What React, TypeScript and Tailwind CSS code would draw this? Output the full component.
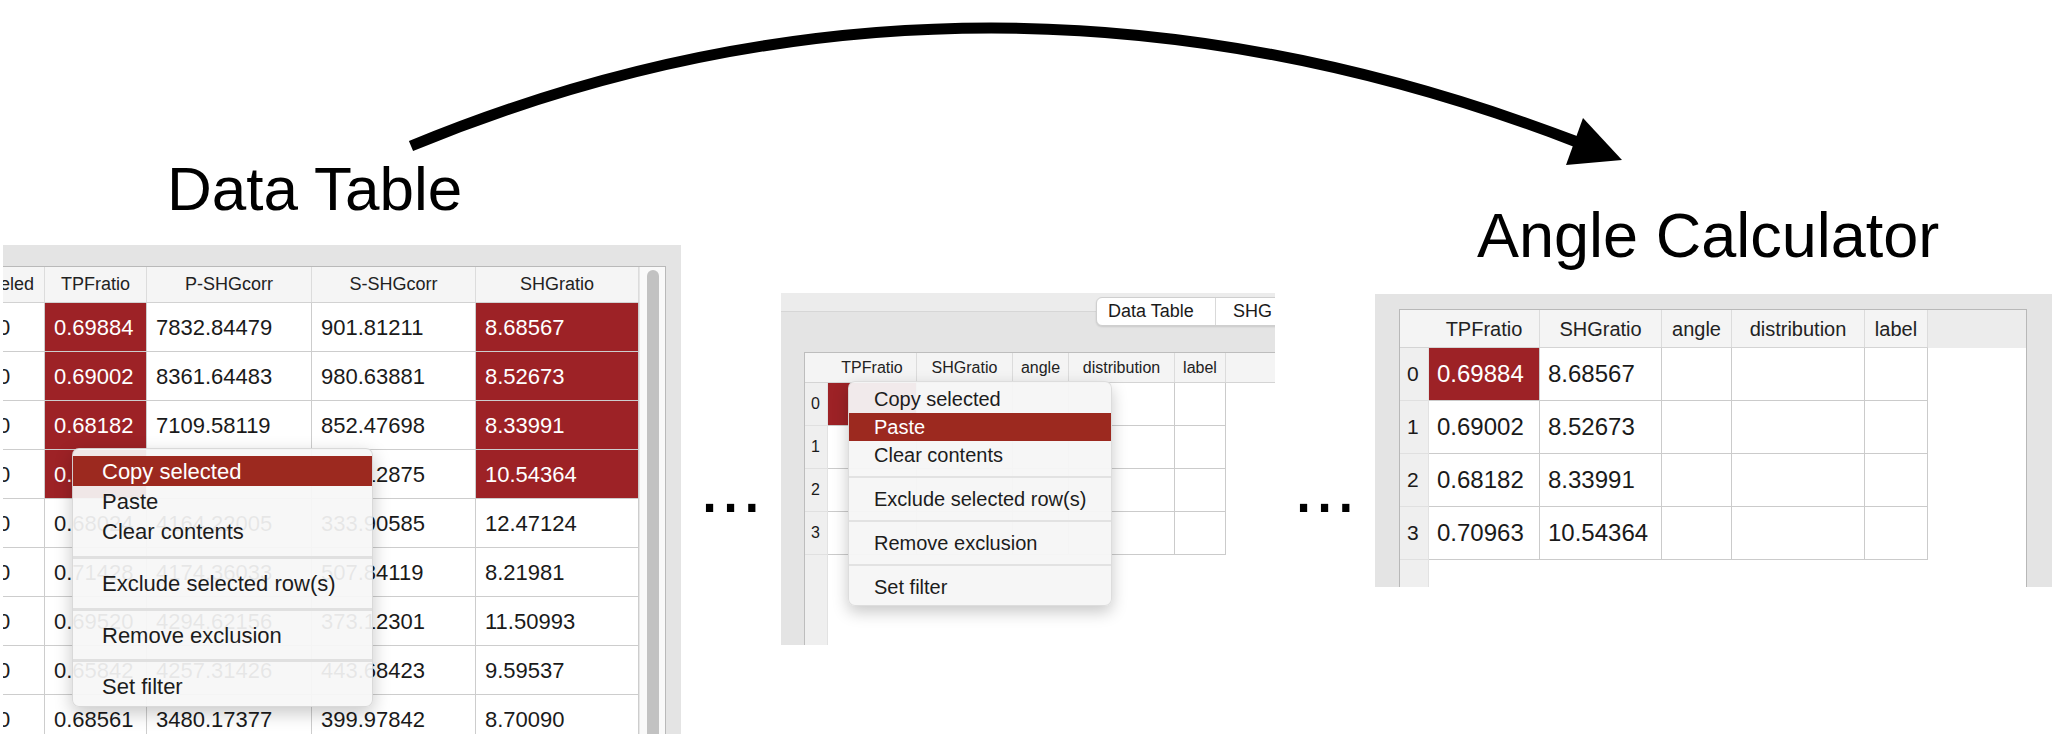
import React from "react";

type Cell = { v: string; sel?: boolean };

const p1Widths = [56, 102, 165, 164, 163];
const p1Headers = ["Labeled", "TPFratio", "P-SHGcorr", "S-SHGcorr", "SHGratio"];
const p1Rows: Cell[][] = [
  [{ v: "0" }, { v: "0.69884", sel: true }, { v: "7832.84479" }, { v: "901.81211" }, { v: "8.68567", sel: true }],
  [{ v: "0" }, { v: "0.69002", sel: true }, { v: "8361.64483" }, { v: "980.63881" }, { v: "8.52673", sel: true }],
  [{ v: "0" }, { v: "0.68182", sel: true }, { v: "7109.58119" }, { v: "852.47698" }, { v: "8.33991", sel: true }],
  [{ v: "0" }, { v: "0.70963", sel: true }, { v: "5930.01860" }, { v: "705.12875" }, { v: "10.54364", sel: true }],
  [{ v: "0" }, { v: "0.68024" }, { v: "4164.22005" }, { v: "333.90585" }, { v: "12.47124" }],
  [{ v: "0" }, { v: "0.71428" }, { v: "4174.36033" }, { v: "507.84119" }, { v: "8.21981" }],
  [{ v: "0" }, { v: "0.69520" }, { v: "4294.62156" }, { v: "373.12301" }, { v: "11.50993" }],
  [{ v: "0" }, { v: "0.65842" }, { v: "4257.31426" }, { v: "443.68423" }, { v: "9.59537" }],
  [{ v: "0" }, { v: "0.68561" }, { v: "3480.17377" }, { v: "399.97842" }, { v: "8.70090" }],
];

const acHeaders = ["TPFratio", "SHGratio", "angle", "distribution", "label"];
const midWidths = [89, 96, 56, 106, 51];
const rightWidths = [111, 122, 70, 133, 63];
const rightRows = [
  ["0.69884", "8.68567"],
  ["0.69002", "8.52673"],
  ["0.68182", "8.33991"],
  ["0.70963", "10.54364"],
];

function Panel1Menu() {
  return (
    <div className="absolute left-[69px] top-[203px] w-[301px] h-[259px] rounded-[7px] bg-[rgba(246,246,246,0.93)] border border-[rgba(0,0,0,0.12)] shadow-[0_6px_18px_rgba(0,0,0,0.22)] flex flex-col py-[7px] text-[22px] text-[#1c1c1c]">
      <div className="h-[30px] shrink-0 flex items-center pl-[29px] bg-[#9c291f] text-white">Copy selected</div>
      <div className="h-[30px] shrink-0 flex items-center pl-[29px]">Paste</div>
      <div className="h-[30px] shrink-0 flex items-center pl-[29px]">Clear contents</div>
      <div className="h-[22px] shrink-0 flex items-center"><div className="h-[3px] w-full bg-[#e0e0e0]" /></div>
      <div className="h-[30px] shrink-0 flex items-center pl-[29px]">Exclude selected row(s)</div>
      <div className="h-[22px] shrink-0 flex items-center"><div className="h-[3px] w-full bg-[#e0e0e0]" /></div>
      <div className="h-[30px] shrink-0 flex items-center pl-[29px]">Remove exclusion</div>
      <div className="h-[21px] shrink-0 flex items-center"><div className="h-[3px] w-full bg-[#e0e0e0]" /></div>
      <div className="h-[30px] shrink-0 flex items-center pl-[29px]">Set filter</div>
    </div>
  );
}

function MidMenu() {
  return (
    <div className="absolute left-[67px] top-[88px] w-[264px] h-[225px] rounded-[7px] bg-[rgba(246,246,246,0.95)] border border-[rgba(0,0,0,0.1)] shadow-[0_6px_16px_rgba(0,0,0,0.22)] flex flex-col pt-[3px] text-[20px] text-[#1c1c1c]">
      <div className="h-[28px] shrink-0 flex items-center pl-[25px]">Copy selected</div>
      <div className="h-[28px] shrink-0 flex items-center pl-[25px] bg-[#9c291f] text-white">Paste</div>
      <div className="h-[28px] shrink-0 flex items-center pl-[25px]">Clear contents</div>
      <div className="h-[16px] shrink-0 flex items-center"><div className="h-[2px] w-full bg-[#e2e2e2]" /></div>
      <div className="h-[28px] shrink-0 flex items-center pl-[25px]">Exclude selected row(s)</div>
      <div className="h-[16px] shrink-0 flex items-center"><div className="h-[2px] w-full bg-[#e2e2e2]" /></div>
      <div className="h-[28px] shrink-0 flex items-center pl-[25px]">Remove exclusion</div>
      <div className="h-[16px] shrink-0 flex items-center"><div className="h-[2px] w-full bg-[#e2e2e2]" /></div>
      <div className="h-[28px] shrink-0 flex items-center pl-[25px]">Set filter</div>
    </div>
  );
}

function Panel1() {
  return (
    <div className="relative w-[678px] h-[489px] bg-[#e4e4e4] overflow-hidden flex flex-col shrink-0">
      <div className="h-[21px] shrink-0" />
      <div className="flex flex-1 min-h-0">
        <div className="w-[663px] shrink-0 bg-white border-t border-r border-[#b9b9b9] flex">
          <div className="w-[636px] shrink-0 overflow-hidden">
            <div className="ml-[-14px] flex flex-col">
              <div className="h-[36px] flex bg-[#f5f5f5] border-b border-[#d2d2d2] text-[18px] text-[#222]">
                {p1Headers.map((h, i) => (
                  <div
                    key={h}
                    style={{ width: p1Widths[i] }}
                    className={
                      "shrink-0 flex items-center border-r border-[#dcdcdc] whitespace-nowrap " +
                      (i === 0 ? "justify-end pr-[10px]" : "justify-center")
                    }
                  >
                    {h}
                  </div>
                ))}
              </div>
              {p1Rows.map((row, r) => (
                <div key={r} className="h-[49px] flex border-b border-[#cdcdcd] text-[22px]">
                  {row.map((c, i) => (
                    <div
                      key={i}
                      style={{ width: p1Widths[i] }}
                      className={
                        "shrink-0 flex items-center pl-[9px] border-r border-[#cdcdcd] whitespace-nowrap " +
                        (c.sel ? "bg-[#9d2226] text-white" : "text-[#1a1a1a]")
                      }
                    >
                      {c.v}
                    </div>
                  ))}
                </div>
              ))}
            </div>
          </div>
          <div className="w-[26px] shrink-0 bg-[#f9f9f9] border-l border-[#e6e6e6] pt-[3px] pl-[7px]">
            <div className="w-[12px] h-[600px] rounded-full bg-[#c2c2c2]" />
          </div>
        </div>
      </div>
      <Panel1Menu />
    </div>
  );
}

function MidPanel() {
  return (
    <div className="relative w-[494px] h-[352px] bg-[#e4e4e4] overflow-hidden flex flex-col shrink-0">
      <div className="h-[19px] shrink-0 bg-[#ececec] border-b border-[#d6d6d6]" />
      <div className="mt-[-15px] h-[29px] shrink-0 pl-[315px] flex">
        <div className="flex h-[29px] bg-white rounded-l-[6px] border border-[#cfcfcf] shadow-[0_1px_2px_rgba(0,0,0,0.12)] text-[18px] text-[#1a1a1a] whitespace-nowrap">
          <div className="w-[119px] shrink-0 flex items-center pl-[11px] border-r border-[#d9d9d9]">Data Table</div>
          <div className="w-[80px] shrink-0 flex items-center pl-[17px]">SHG</div>
        </div>
      </div>
      <div className="mt-[26px] flex flex-1 min-h-0">
        <div className="w-[23px] shrink-0" />
        <div className="flex-1 bg-white border-t border-l border-[#bdbdbd] flex flex-col">
          <div className="h-[30px] shrink-0 flex bg-[#f4f4f4] border-b border-[#d4d4d4] text-[16px] text-[#222]">
            <div className="w-[23px] shrink-0" />
            {acHeaders.map((h, i) => (
              <div
                key={h}
                style={{ width: midWidths[i] }}
                className="shrink-0 flex items-center justify-center border-r border-[#dcdcdc] whitespace-nowrap"
              >
                {h}
              </div>
            ))}
          </div>
          <div className="flex flex-1">
            <div className="w-[23px] shrink-0 bg-[#efefef] border-r border-[#e2e2e2] flex flex-col text-[16px] text-[#1a1a1a]">
              {[0, 1, 2, 3].map((n) => (
                <div key={n} className="h-[43px] shrink-0 flex items-center pl-[6px] border-b border-[#e0e0e0]">
                  {n}
                </div>
              ))}
            </div>
            <div className="flex flex-col">
              {[0, 1, 2, 3].map((r) => (
                <div key={r} className="h-[43px] flex border-b border-[#cbcbcb]">
                  {midWidths.map((w, i) => (
                    <div
                      key={i}
                      style={{ width: w }}
                      className={"shrink-0 border-r border-[#cbcbcb] " + (r === 0 && i === 0 ? "bg-[#9d2226]" : "")}
                    />
                  ))}
                </div>
              ))}
            </div>
          </div>
        </div>
      </div>
      <MidMenu />
    </div>
  );
}

function RightPanel() {
  return (
    <div className="w-[677px] h-[293px] bg-[#e4e4e4] overflow-hidden flex flex-col shrink-0">
      <div className="h-[15px] shrink-0" />
      <div className="flex flex-1 min-h-0">
        <div className="w-[24px] shrink-0" />
        <div className="w-[628px] shrink-0 bg-white border-t border-l border-r border-[#b8b8b8] flex flex-col">
          <div className="h-[38px] shrink-0 flex bg-[#ececec] text-[20px] text-[#222]">
            <div className="flex bg-[#f4f4f4] border-b border-[#d4d4d4]">
              <div className="w-[29px] shrink-0" />
              {acHeaders.map((h, i) => (
                <div
                  key={h}
                  style={{ width: rightWidths[i] }}
                  className="shrink-0 flex items-center justify-center border-r border-[#dcdcdc] whitespace-nowrap"
                >
                  {h}
                </div>
              ))}
            </div>
          </div>
          <div className="flex flex-1">
            <div className="w-[29px] shrink-0 bg-[#efefef] border-r border-[#e2e2e2] flex flex-col text-[21px] text-[#1a1a1a]">
              {[0, 1, 2, 3].map((n) => (
                <div key={n} className="h-[53px] shrink-0 flex items-center pl-[7px] border-b border-[#e0e0e0]">
                  {n}
                </div>
              ))}
            </div>
            <div className="flex flex-col">
              {rightRows.map((row, r) => (
                <div key={r} className="h-[53px] flex border-b border-[#cbcbcb] text-[24px]">
                  {rightWidths.map((w, i) => (
                    <div
                      key={i}
                      style={{ width: w }}
                      className={
                        "shrink-0 flex items-center pl-[8px] border-r border-[#cbcbcb] whitespace-nowrap " +
                        (r === 0 && i === 0 ? "bg-[#9d2226] text-white" : "text-[#1a1a1a]")
                      }
                    >
                      {row[i] ?? ""}
                    </div>
                  ))}
                </div>
              ))}
            </div>
          </div>
        </div>
        <div className="flex-1" />
      </div>
    </div>
  );
}

function Ellipsis() {
  return (
    <div className="ml-[18px] mt-[448px] w-[62px] h-[76px] shrink-0 text-[76px] leading-none text-black whitespace-nowrap">
      ...
    </div>
  );
}

export default function App() {
  return (
    <div className="relative w-[2062px] h-[734px] overflow-hidden bg-white font-['Liberation_Sans',Arial,sans-serif]">
      <div className="flex items-start">
        <div className="ml-[3px] w-[678px] shrink-0 flex flex-col pt-[158px]">
          <div className="ml-[164px] h-[87px] text-[62px] leading-none text-black whitespace-nowrap">Data Table</div>
          <Panel1 />
        </div>
        <Ellipsis />
        <div className="ml-[20px] mt-[293px] shrink-0">
          <MidPanel />
        </div>
        <Ellipsis />
        <div className="ml-[20px] w-[677px] shrink-0 flex flex-col pt-[204px]">
          <div className="ml-[102px] h-[90px] text-[63px] leading-none text-black whitespace-nowrap">Angle Calculator</div>
          <RightPanel />
        </div>
      </div>
      <svg className="absolute left-0 top-0 pointer-events-none" width="2062" height="734" viewBox="0 0 2062 734">
        <path d="M411 146 Q 978 -88 1577 142" fill="none" stroke="#000" strokeWidth="11" />
        <polygon points="1583,118 1622,160 1566,165" fill="#000" />
      </svg>
    </div>
  );
}
